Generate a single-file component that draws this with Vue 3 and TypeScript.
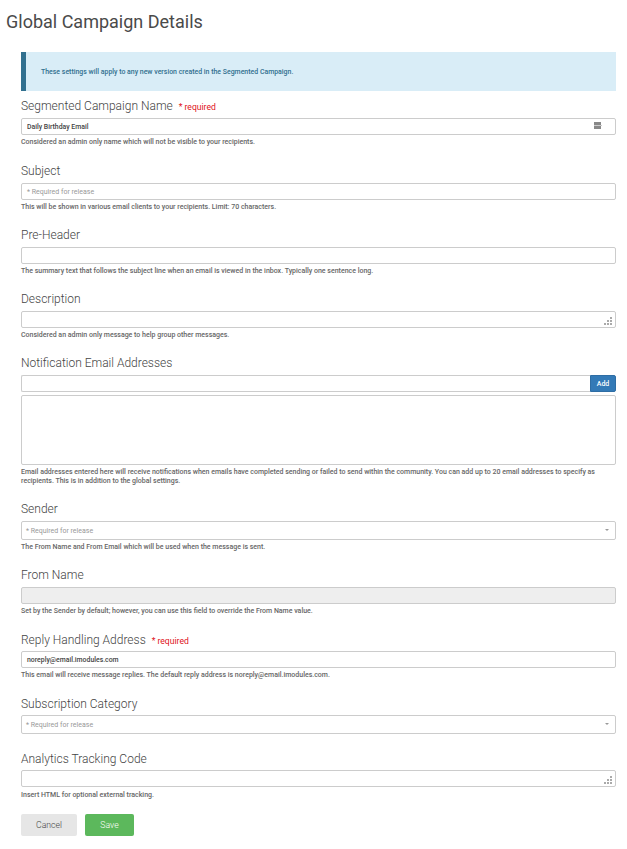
<script setup lang="ts">
const placeholder = '* Required for release'
</script>

<template>
  <main class="page">
    <h1 class="title">Global Campaign Details</h1>
    <form class="form" @submit.prevent>
      <div class="alert">These settings will apply to any new version created in the Segmented Campaign.</div>

      <section class="field first">
        <label class="label">Segmented Campaign Name <span class="req">* required</span></label>
        <div class="control filled">
          <span>Daily Birthday Email</span>
          <svg class="keypass" width="8" height="7" viewBox="0 0 8 7"><rect width="7" height="7" fill="#888" /><rect y="3" width="8" height="1" fill="#ccc" /></svg>
        </div>
        <p class="help">Considered an admin only name which will not be visible to your recipients.</p>
      </section>

      <section class="field">
        <label class="label">Subject</label>
        <div class="control ph">{{ placeholder }}</div>
        <p class="help">This will be shown in various email clients to your recipients. Limit: 70 characters.</p>
      </section>

      <section class="field">
        <label class="label">Pre-Header</label>
        <div class="control"></div>
        <p class="help">The summary text that follows the subject line when an email is viewed in the inbox. Typically one sentence long.</p>
      </section>

      <section class="field">
        <label class="label">Description</label>
        <div class="control grip-host">
          <svg class="grip" width="8" height="8" viewBox="0 0 8 8" fill="#aaa"><rect x="6" y="0" width="2" height="2" /><rect x="3" y="3" width="2" height="2" /><rect x="6" y="3" width="2" height="2" /><rect x="0" y="6" width="2" height="2" /><rect x="3" y="6" width="2" height="2" /><rect x="6" y="6" width="2" height="2" /></svg>
        </div>
        <p class="help">Considered an admin only message to help group other messages.</p>
      </section>

      <section class="field tight">
        <label class="label">Notification Email Addresses</label>
        <div class="add-row">
          <div class="control add-input"></div>
          <button class="add" type="button">Add</button>
        </div>
        <div class="control big"></div>
        <p class="help two">Email addresses entered here will receive notifications when emails have completed sending or failed to send within the community. You can add up to 20 email addresses to specify as recipients. This is in addition to the global settings.</p>
      </section>

      <section class="field">
        <label class="label">Sender</label>
        <div class="control select ph">{{ placeholder }}<i class="caret"></i></div>
        <p class="help">The From Name and From Email which will be used when the message is sent.</p>
      </section>

      <section class="field">
        <label class="label">From Name</label>
        <div class="control disabled"></div>
        <p class="help">Set by the Sender by default; however, you can use this field to override the From Name value.</p>
      </section>

      <section class="field low">
        <label class="label">Reply Handling Address <span class="req">* required</span></label>
        <div class="control filled">noreply@email.imodules.com</div>
        <p class="help">This email will receive message replies. The default reply address is noreply@email.imodules.com.</p>
      </section>

      <section class="field no-help low">
        <label class="label">Subscription Category</label>
        <div class="control select ph">{{ placeholder }}<i class="caret"></i></div>
      </section>

      <section class="field last low">
        <label class="label">Analytics Tracking Code</label>
        <div class="control grip-host">
          <svg class="grip" width="8" height="8" viewBox="0 0 8 8" fill="#aaa"><rect x="6" y="0" width="2" height="2" /><rect x="3" y="3" width="2" height="2" /><rect x="6" y="3" width="2" height="2" /><rect x="0" y="6" width="2" height="2" /><rect x="3" y="6" width="2" height="2" /><rect x="6" y="6" width="2" height="2" /></svg>
        </div>
        <p class="help">Insert HTML for optional external tracking.</p>
      </section>

      <div class="actions">
        <button class="btn cancel" type="button">Cancel</button>
        <button class="btn save" type="submit">Save</button>
      </div>
    </form>
  </main>
</template>

<style>
html, body { background: #fff; }
</style>

<style scoped>
.page {
  box-sizing: border-box;
  width: 627px;
  height: 849px;
  overflow: hidden;
  font-family: Roboto, "Liberation Sans", sans-serif;
  color: #555;
}
.title {
  margin: 0;
  padding: 10px 0 0 6px;
  height: 42px;
  box-sizing: border-box;
  font-size: 18px;
  line-height: 24px;
  font-weight: 400;
  color: #4a4a4a;
}
.form { padding: 10px 11px 0 21px; }
.alert {
  box-sizing: border-box;
  height: 39px;
  display: flex;
  align-items: center;
  padding-left: 15px;
  margin-bottom: 7px;
  background: #d9edf7;
  border-left: 5px solid #31708f;
  color: #31708f;
  font-size: 6.95px;
  font-weight: 500;
}
.field { margin-bottom: 16px; }
.field.first { margin-bottom: 17px; }
.field.tight { margin-bottom: 15px; }
.field.no-help { margin-bottom: 16px; }
.field.last { margin-bottom: 15px; }
.field.last .help { margin-top: 4px; }
.label {
  display: block;
  height: 16px;
  line-height: 16px;
  margin-bottom: 4px;
  font-size: 12px;
  font-weight: 300;
  color: #444;
}
.low .label { height: 17px; line-height: 18px; margin-bottom: 3px; }
.req { margin-left: 3px; font-size: 8.6px; font-weight: 400; color: #e01020; }
.control {
  position: relative;
  box-sizing: border-box;
  height: 17px;
  display: flex;
  align-items: center;
  padding: 0 5px;
  border: 1px solid #ccc;
  border-radius: 2px;
  background: #fff;
  font-size: 7px;
}
.filled { color: #444; font-weight: 500; font-size: 6.9px; }
.ph { color: #999; }
.select { height: 19px; padding: 0 4px; }
.disabled { background: #eee; }
.big { height: 70px; margin-top: 3px; }
.add-row { display: flex; height: 17px; }
.add-input { flex: 1; border-right: 0; border-radius: 2px 0 0 2px; }
.add {
  width: 26px;
  height: 17px;
  padding: 0;
  border: 1px solid #2e6da4;
  border-radius: 0 2px 2px 0;
  background: #337ab7;
  color: #fff;
  font: 500 7px Roboto, sans-serif;
}
.help {
  margin: 3px 0 0;
  font-size: 7px;
  line-height: 8px;
  font-weight: 500;
  color: #666;
}
.help.two { line-height: 9px; }
.keypass { position: absolute; right: 13px; top: 3px; }
.grip { position: absolute; right: 3px; bottom: 2px; }
.caret {
  position: absolute;
  right: 6px;
  top: 7px;
  width: 0;
  height: 0;
  border-left: 2.5px solid transparent;
  border-right: 2.5px solid transparent;
  border-top: 2.5px solid #999;
}
.actions { display: flex; gap: 8px; }
.btn {
  height: 22px;
  border: 0;
  border-radius: 2px;
  font: 300 8.7px Roboto, sans-serif;
  padding: 0;
}
.cancel { width: 56px; background: #e6e6e6; color: #444; }
.save { width: 49px; background: #5cb85c; color: #fff; }
</style>
